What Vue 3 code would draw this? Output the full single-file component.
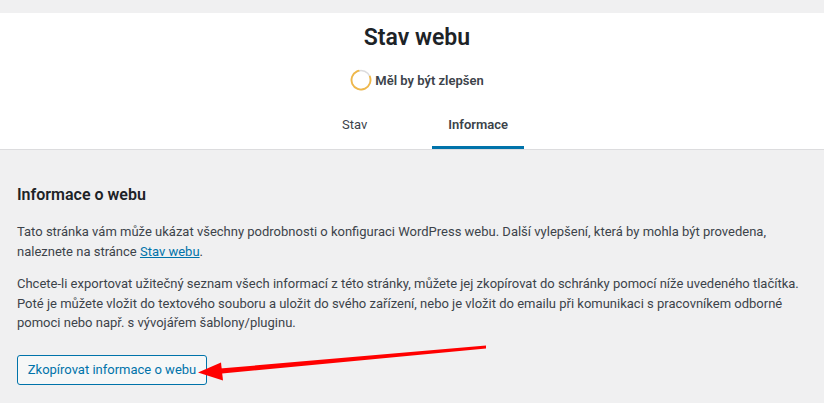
<template>
  <div class="page">
    <header class="head">
      <h1>Stav webu</h1>
      <div class="status">
        <svg class="ring" width="22" height="22" viewBox="0 0 22 22">
          <circle cx="11" cy="11" r="9.5" fill="none" stroke="#dcdcde" stroke-width="1.5" />
          <circle cx="11" cy="11" r="9.5" fill="none" stroke="#f0b849" stroke-width="1.8" stroke-dasharray="47 60" transform="rotate(-25 11 11)" />
        </svg>
        <span>Měl by být zlepšen</span>
      </div>
      <nav class="tabs">
        <a class="tab">Stav</a>
        <a class="tab active">Informace</a>
      </nav>
    </header>
    <main class="body">
      <h2>Informace o webu</h2>
      <p>Tato stránka vám může ukázat všechny podrobnosti o konfiguraci WordPress webu. Další vylepšení, která by mohla být provedena, naleznete na stránce <a class="link">Stav webu</a>.</p>
      <p>Chcete-li exportovat užitečný seznam všech informací z této stránky, můžete jej zkopírovat do schránky pomocí níže uvedeného tlačítka. Poté je můžete vložit do textového souboru a uložit do svého zařízení, nebo je vložit do emailu při komunikaci s pracovníkem odborné pomoci nebo např. s vývojářem šablony/pluginu.</p>
      <button class="copy">Zkopírovat informace o webu</button>
      <!-- red arrow drawn over the screenshot -->
      <svg class="arrow" width="300" height="45" viewBox="0 0 300 45">
        <polygon points="288,0.6 288,3.4 24,28.5 22,23.5" fill="#f00" />
        <polygon points="0,27.5 23,17.5 25,35.5" fill="#f00" />
      </svg>
    </main>
  </div>
</template>

<script setup>
</script>

<style scoped>
.page {
  width: 824px;
  height: 403px;
  overflow: hidden;
  background: #f0f0f1;
  font-family: Roboto, "Liberation Sans", sans-serif;
  color: #3c434a;
  font-size: 13px;
  position: relative;
}

.head {
  margin-top: 13px;
  height: 137px;
  box-sizing: border-box;
  padding-left: 10px;
  background: #fff;
  border-bottom: 1px solid #dcdcde;
  display: flex;
  flex-direction: column;
  align-items: center;
}

h1 {
  margin: 10px 0 0;
  font-size: 23px;
  line-height: 29px;
  font-weight: 600;
  color: #1d2327;
}

.status {
  display: flex;
  align-items: center;
  gap: 3px;
  margin-top: 17px;
  font-weight: 600;
  color: #3c434a;
}

.tabs {
  display: flex;
  margin-top: auto;
  margin-left: 16px;
  gap: 49px;
}

.tab {
  padding: 0 16px;
  height: 49px;
  line-height: 49px;
  box-sizing: border-box;
  border-bottom: 3px solid transparent;
}

.tab.active {
  font-weight: 600;
  border-bottom-color: #0073aa;
}

.body {
  padding: 35px 17px 0;
  position: relative;
}

h2 {
  margin: 0 0 17px;
  font-size: 16px;
  line-height: 20px;
  font-weight: 600;
  color: #1d2327;
}

p {
  margin: 0 0 13px;
  line-height: 19.5px;
}

.link {
  color: #0073aa;
  text-decoration: underline;
}

.copy {
  display: block;
  margin-top: 22px;
  height: 30px;
  width: 190px;
  padding: 0;
  background: #f6f7f7;
  border: 1px solid #0073aa;
  border-radius: 3px;
  color: #0073aa;
  font: inherit;
}

.arrow {
  position: absolute;
  left: 198px;
  top: 195px;
}
</style>
